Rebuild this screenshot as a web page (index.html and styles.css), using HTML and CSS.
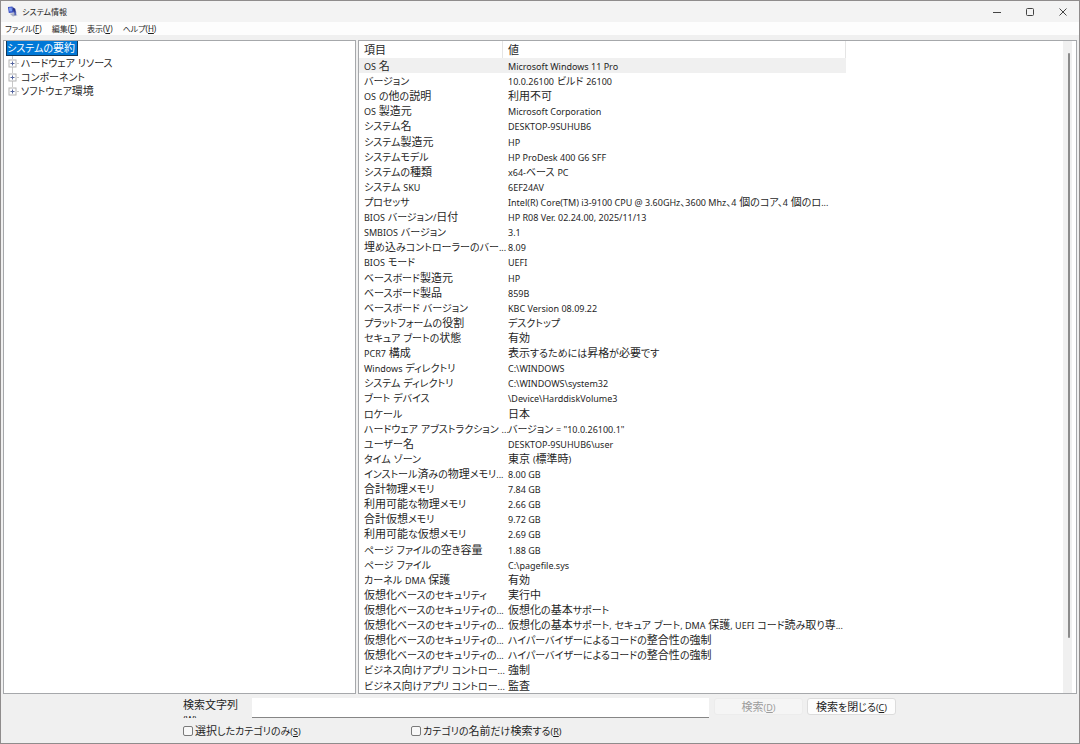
FILE: index.html
```html
<!DOCTYPE html>
<html lang="ja">
<head>
    <meta charset="UTF-8">
    <meta name="viewport" content="width=device-width, initial-scale=1.0">
    <title>システム情報</title>
    <link rel="stylesheet" href="styles.css">
</head>
<body>
    <div class="window">
        <header class="titlebar">
            <svg class="app-icon" viewBox="0 0 12 12" aria-hidden="true">
                <path d="M1 1l5-.5 1 6.5-5 .5z" fill="#3a4fc4"/>
                <path d="M2 2l3-.3.6 4-3 .3z" fill="#7d9cf0"/>
                <path d="M6 1l3 2 1 5-3-1z" fill="#26348c"/>
                <path d="M3 8.5l5-1 3.500 2.500-5 1.500z" fill="#a9afc4"/>
                <path d="M8 6h2v4h-2z" fill="#5262b8"/>
            </svg>
            <h1 class="title">システム情報</h1>
            <div class="window-controls">
                <button type="button" class="control" aria-label="最小化">
                    <svg viewBox="0 0 10 10"><path d="M1 5.5h8"/></svg>
                </button>
                <button type="button" class="control" aria-label="最大化">
                    <svg viewBox="0 0 10 10"><rect x="1.5" y="1.5" width="7" height="7" rx="1"/></svg>
                </button>
                <button type="button" class="control" aria-label="閉じる">
                    <svg viewBox="0 0 10 10"><path d="M1.5 1.5l7 7M8.5 1.5l-7 7"/></svg>
                </button>
            </div>
        </header>

        <nav class="menubar">
            <a href="#">ファイル(<u>F</u>)</a>
            <a href="#">編集(<u>E</u>)</a>
            <a href="#">表示(<u>V</u>)</a>
            <a href="#">ヘルプ(<u>H</u>)</a>
        </nav>

        <main class="panes">
            <ul class="pane tree">
                <li class="root"><a href="#" class="selected mixed">システムの要約</a></li>
                <li><svg class="expander" viewBox="0 0 12 14"><path class="line" d="M5.5 0v3M5.500 11v3M10 7.500h2"/><rect x="2" y="4" width="7" height="7"/><path class="plus" d="M3.500 7.500h4M5.500 5.500v4"/></svg><a href="#" class="mixed">ハードウェア リソース</a></li>
                <li><svg class="expander" viewBox="0 0 12 14"><path class="line" d="M5.500 0v3M5.500 11v3M10 7.500h2"/><rect x="2" y="4" width="7" height="7"/><path class="plus" d="M3.500 7.500h4M5.500 5.500v4"/></svg><a href="#" class="mixed">コンポーネント</a></li>
                <li><svg class="expander" viewBox="0 0 12 14"><path class="line" d="M5.500 0v3M10 7.500h2"/><rect x="2" y="4" width="7" height="7"/><path class="plus" d="M3.500 7.500h4M5.500 5.500v4"/></svg><a href="#" class="mixed">ソフトウェア環境</a></li>
            </ul>

            <section class="pane details">
                <table class="info">
                    <thead>
                        <tr><th class="col-item">項目</th><th class="col-value">値</th></tr>
                    </thead>
                    <tbody id="infoBody"></tbody>
                </table>
                <div class="scrollbar"><div class="thumb"></div></div>
            </section>
        </main>

        <form class="search">
            <div class="search-row">
                <label class="search-label" for="query">検索文字列<br><small>(W):</small></label>
                <input type="text" id="query" class="query">
                <button type="button" class="btn" disabled>検索<small>(<u>D</u>)</small></button>
                <button type="button" class="btn"><span class="mixed">検索を閉じる</span><small>(<u>C</u>)</small></button>
            </div>
            <div class="option-row">
                <label class="option"><input type="checkbox"><span class="mixed">選択したカテゴリのみ</span><small>(<u>S</u>)</small></label>
                <label class="option"><input type="checkbox"><span class="mixed">カテゴリの名前だけ検索する</span><small>(<u>R</u>)</small></label>
            </div>
        </form>
    </div>

    <script src="script.js"></script>
</body>
</html>
```

FILE: script.js
```js
// システムの要約の項目と値
const summary = [
    ['OS 名', 'Microsoft Windows 11 Pro'],
    ['バージョン', '10.0.26100 ビルド 26100'],
    ['OS の他の説明', '利用不可'],
    ['OS 製造元', 'Microsoft Corporation'],
    ['システム名', 'DESKTOP-9SUHUB6'],
    ['システム製造元', 'HP'],
    ['システムモデル', 'HP ProDesk 400 G6 SFF'],
    ['システムの種類', 'x64-ベース PC'],
    ['システム SKU', '6EF24AV'],
    ['プロセッサ', 'Intel(R) Core(TM) i3-9100 CPU @ 3.60GHz、3600 Mhz、4 個のコア、4 個のロ...'],
    ['BIOS バージョン/日付', 'HP R08 Ver. 02.24.00, 2025/11/13'],
    ['SMBIOS バージョン', '3.1'],
    ['埋め込みコントローラーのバー...', '8.09'],
    ['BIOS モード', 'UEFI'],
    ['ベースボード製造元', 'HP'],
    ['ベースボード製品', '859B'],
    ['ベースボード バージョン', 'KBC Version 08.09.22'],
    ['プラットフォームの役割', 'デスクトップ'],
    ['セキュア ブートの状態', '有効'],
    ['PCR7 構成', '表示するためには昇格が必要です'],
    ['Windows ディレクトリ', 'C:\\WINDOWS'],
    ['システム ディレクトリ', 'C:\\WINDOWS\\system32'],
    ['ブート デバイス', '\\Device\\HarddiskVolume3'],
    ['ロケール', '日本'],
    ['ハードウェア アブストラクション ...', 'バージョン = "10.0.26100.1"'],
    ['ユーザー名', 'DESKTOP-9SUHUB6\\user'],
    ['タイム ゾーン', '東京 (標準時)'],
    ['インストール済みの物理メモリ...', '8.00 GB'],
    ['合計物理メモリ', '7.84 GB'],
    ['利用可能な物理メモリ', '2.66 GB'],
    ['合計仮想メモリ', '9.72 GB'],
    ['利用可能な仮想メモリ', '2.69 GB'],
    ['ページ ファイルの空き容量', '1.88 GB'],
    ['ページ ファイル', 'C:\\pagefile.sys'],
    ['カーネル DMA 保護', '有効'],
    ['仮想化ベースのセキュリティ', '実行中'],
    ['仮想化ベースのセキュリティの...', '仮想化の基本サポート'],
    ['仮想化ベースのセキュリティの...', '仮想化の基本サポート, セキュア ブート, DMA 保護, UEFI コード読み取り専...'],
    ['仮想化ベースのセキュリティの...', 'ハイパーバイザーによるコードの整合性の強制'],
    ['仮想化ベースのセキュリティの...', 'ハイパーバイザーによるコードの整合性の強制'],
    ['ビジネス向けアプリ コントロー...', '強制'],
    ['ビジネス向けアプリ コントロー...', '監査']
];

// 英数字とかなは漢字より小さい文字で表示する
function setMixedText(element, text) {
    element.textContent = '';
    const runs = text.match(/[\x21-\x7e]+(?: +[\x21-\x7e]+)*|[\u3001-\u30ff]+|[^\x21-\x7e\u3001-\u30ff]+/g);
    runs.forEach(run => {
        if (/^[\x21-\x7e]/.test(run)) {
            const latin = document.createElement('small');
            latin.textContent = run;
            element.appendChild(latin);
        } else if (/^[\u3001-\u30ff]/.test(run)) {
            const kana = document.createElement('span');
            kana.className = 'kana';
            kana.textContent = run;
            element.appendChild(kana);
        } else {
            element.appendChild(document.createTextNode(run));
        }
    });
}

const infoBody = document.getElementById('infoBody');
summary.forEach(([item, value], index) => {
    const row = infoBody.insertRow();
    if (index === 0) {
        row.className = 'current';
    }
    setMixedText(row.insertCell(), item);
    setMixedText(row.insertCell(), value);
});

document.querySelectorAll('.mixed').forEach(element => {
    setMixedText(element, element.textContent);
});
```

FILE: styles.css
```css
:root {
    --face: #f0f0f0;
    --border: #a6a8ab;
    --text: #1f1f1f;
    --select: #0078d7;
}
* {
    box-sizing: border-box;
}
body {
    margin: 0;
    font-family: "Noto Sans", "Noto Sans CJK JP", sans-serif;
    font-size: 11px;
    line-height: 14px;
    font-feature-settings: "palt";
    color: var(--text);
}
small {
    font-size: 9px;
    line-height: 1px;
}
.kana {
    font-size: 10px;
    line-height: 1px;
}
a {
    color: inherit;
    text-decoration: none;
}
button,
input {
    font: inherit;
    font-feature-settings: inherit;
    color: inherit;
    margin: 0;
}
.window {
    display: flex;
    flex-direction: column;
    height: 100vh;
    border: 1px solid #8f8c8c;
    background-color: var(--face);
}

/* title bar */
.titlebar {
    display: flex;
    align-items: center;
    height: 21px;
    padding-left: 6px;
    background-color: #f3f3f3;
}
.app-icon {
    width: 11px;
    height: 11px;
}
.title {
    flex: 1;
    margin: 0 0 0 4px;
    font-size: 8px;
    font-weight: normal;
}
.window-controls {
    display: flex;
}
.control {
    display: flex;
    align-items: center;
    justify-content: center;
    width: 33px;
    height: 21px;
    padding: 0;
    border: none;
    background: none;
}
.control svg {
    width: 10px;
    height: 10px;
    fill: none;
    stroke: #444;
}

/* menu */
.menubar {
    display: flex;
    gap: 10px;
    padding: 0 4px;
    height: 13px;
    font-size: 8px;
    background-color: #fdfdfd;
}

/* panes */
.panes {
    display: flex;
    flex: 1;
    gap: 2px;
    min-height: 0;
    padding: 5px 2px 0;
}
.pane {
    margin: 0;
    border: 1px solid var(--border);
    background-color: white;
    overflow: hidden;
    white-space: nowrap;
}
.tree {
    width: 353px;
    padding: 0 3px;
    list-style: none;
}
.tree li {
    display: flex;
}
.tree .root {
    margin-bottom: 1px;
}
.selected {
    padding-right: 2px;
    background-color: var(--select);
    color: white;
    outline: 1px solid #12395c;
}
.expander {
    width: 12px;
    height: 14px;
    margin-right: 2px;
    fill: white;
    stroke: #b4b4b4;
}
.expander .line {
    stroke: #c8c8c8;
}
.expander .plus {
    stroke: #56669f;
}
.details {
    display: flex;
    flex: 1;
    justify-content: space-between;
    padding-right: 4px;
}
.info {
    width: 487px;
    height: 100%;
    table-layout: fixed;
    border-collapse: separate;
    border-spacing: 0;
}
.info th,
.info td {
    padding: 0 0 0 5px;
    font-weight: normal;
    text-align: left;
    line-height: 15px;
}
.info th {
    border-right: 1px solid #e5e5e5;
    height: 17px;
}
.info .col-item {
    width: 144px;
}
.current {
    background-color: var(--face);
}
.scrollbar {
    display: flex;
    justify-content: flex-end;
    width: 9px;
    padding: 12px 2px 55px 0;
    background-color: var(--face);
}
.thumb {
    width: 2px;
    border-radius: 1px;
    background-color: #8b8b8b;
}

/* search bar */
.search {
    padding: 4px 4px 5px 182px;
}
.search-row {
    display: flex;
    height: 20px;
}
.search-label {
    width: 69px;
    overflow: hidden;
}
.query {
    width: 457px;
    margin-right: 5px;
    border: none;
    border-bottom: 1px solid #868686;
    background-color: white;
}
.btn {
    width: 89px;
    height: 17px;
    margin-right: 4px;
    padding: 0;
    border: 1px solid #dcdcdc;
    border-radius: 3px;
    background-color: #fdfdfd;
    line-height: 14px;
}
.btn:disabled {
    background-color: #f5f5f5;
    border-color: #ececec;
    color: #9c9c9c;
}
.option-row {
    display: flex;
    margin-top: 6px;
}
.option {
    display: flex;
    align-items: center;
    width: 228px;
}
.option input {
    appearance: none;
    width: 10px;
    height: 10px;
    margin-right: 2px;
    border: 1px solid #7a7a7a;
    border-radius: 2px;
    background-color: #f8f8f8;
}
```
